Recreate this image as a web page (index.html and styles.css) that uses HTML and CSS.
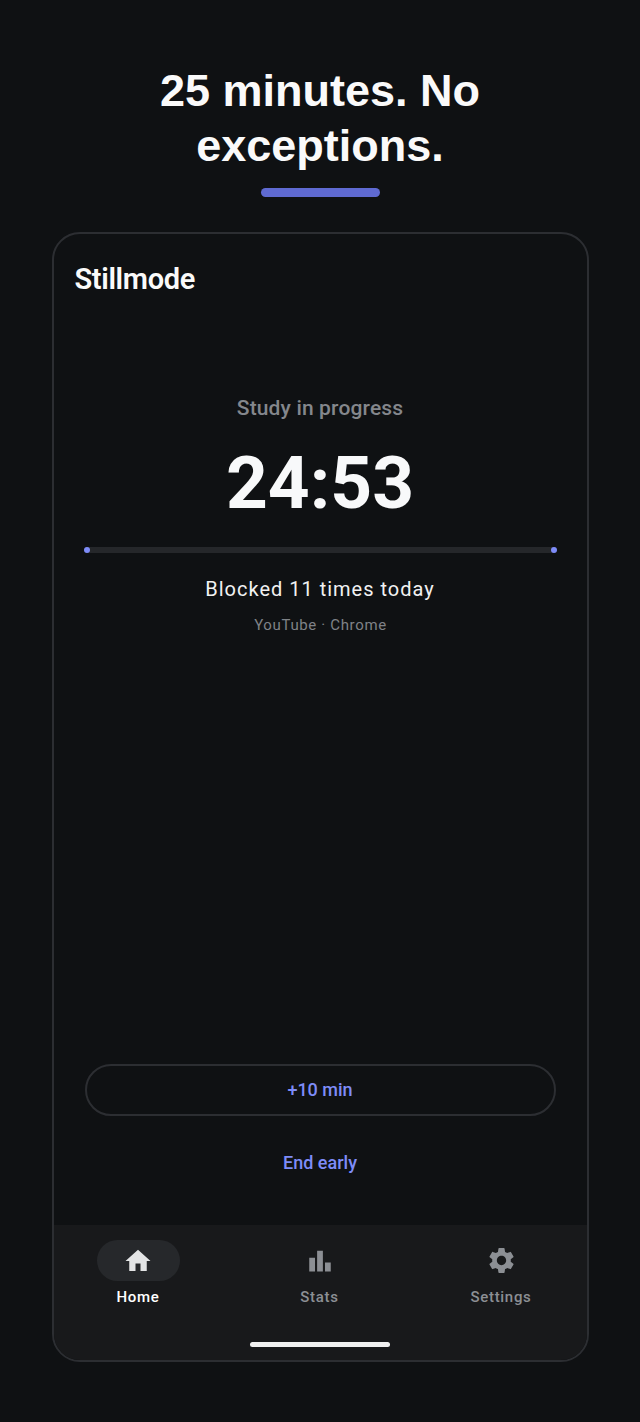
FILE: index.html
```html
<!DOCTYPE html>
<html lang="en">
<head>
<meta charset="utf-8">
<title>Stillmode</title>
<link rel="stylesheet" href="styles.css">
</head>
<body>
<header class="hero">
  <h1 class="headline">25 minutes. No exceptions.</h1>
  <div class="accent"></div>
</header>
<main class="phone">
  <div class="app-title">Stillmode</div>
  <section class="session">
    <div class="status">Study in progress</div>
    <div class="timer">24:53</div>
    <div class="progress"><span class="dot"></span><span class="dot"></span></div>
    <div class="blocked">Blocked 11 times today</div>
    <div class="source">YouTube · Chrome</div>
  </section>
  <section class="actions">
    <div class="extend">+10 min</div>
    <div class="end">End early</div>
  </section>
  <nav class="tabbar">
    <div class="tabs">
      <div class="tab active">
        <div class="pill"><svg class="icon" viewBox="0 0 24 24"><path d="M10 20v-6h4v6h5v-8h3L12 3 2 12h3v8z"/></svg></div>
        <div class="tab-label">Home</div>
      </div>
      <div class="tab">
        <div class="pill"><svg class="icon" viewBox="0 0 24 24"><path d="M3.4 9.4H8v11H3.4zM9.7 3.8h4.6v16.6H9.7zM16 13.2h4.6v7.2H16z"/></svg></div>
        <div class="tab-label">Stats</div>
      </div>
      <div class="tab">
        <div class="pill"><svg class="icon icon-gear" viewBox="0 0 24 24"><path d="M19.14 12.94c.04-.3.06-.61.06-.94 0-.32-.02-.64-.07-.94l2.03-1.58a.49.49 0 0 0 .12-.61l-1.92-3.32a.488.488 0 0 0-.59-.22l-2.39.96c-.5-.38-1.03-.7-1.62-.94l-.36-2.54a.484.484 0 0 0-.48-.41h-3.84c-.24 0-.43.17-.47.41l-.36 2.54c-.59.24-1.13.57-1.62.94l-2.39-.96c-.22-.08-.47 0-.59.22L2.74 8.87c-.12.21-.08.47.12.61l2.03 1.58c-.05.3-.09.63-.09.94s.02.64.07.94l-2.03 1.58a.49.49 0 0 0-.12.61l1.92 3.32c.12.22.37.29.59.22l2.39-.96c.5.38 1.03.7 1.62.94l.36 2.54c.05.24.24.41.48.41h3.84c.24 0 .44-.17.47-.41l.36-2.54c.59-.24 1.13-.56 1.62-.94l2.39.96c.22.08.47 0 .59-.22l1.92-3.32c.12-.22.07-.47-.12-.61l-2.01-1.58zM12 15.6c-1.98 0-3.6-1.62-3.6-3.6s1.62-3.6 3.6-3.6 3.6 1.62 3.6 3.6-1.62 3.6-3.6 3.6z"/></svg></div>
        <div class="tab-label">Settings</div>
      </div>
    </div>
    <div class="home-indicator"></div>
  </nav>
</main>
</body>
</html>
```
FILE: styles.css
```css
* { box-sizing: border-box; }
html, body { margin: 0; height: 100%; }
body {
  background: #0f1113;
  font-family: Roboto, sans-serif;
  color: #fff;
  display: flex;
  flex-direction: column;
  align-items: center;
  height: 1422px;
  overflow: hidden;
}
.hero {
  display: flex;
  flex-direction: column;
  align-items: center;
  padding-top: 63px;
  width: 100%;
}
.headline {
  margin: 0;
  width: 400px;
  text-align: center;
  font-family: "Liberation Sans", Arial, sans-serif;
  font-weight: 700;
  font-size: 45px;
  line-height: 55px;
  color: #fafafa;
}
.accent {
  width: 119px;
  height: 9px;
  margin-top: 15px;
  border-radius: 5px;
  background: #5f6ad2;
}
.phone {
  width: 537px;
  height: 1130px;
  margin-top: 35px;
  border: 2px solid #2c2e32;
  border-radius: 28px;
  overflow: hidden;
  display: flex;
  flex-direction: column;
  background: #0f1113;
}
.app-title {
  padding: 27px 0 0 21px;
  font-size: 29px;
  line-height: 36px;
  font-weight: 600;
  letter-spacing: -0.35px;
  color: #fafafa;
}
.session {
  display: flex;
  flex-direction: column;
  align-items: center;
  padding: 99px 31px 0;
  flex: 1;
}
.status {
  font-size: 21px;
  line-height: 24px;
  font-weight: 500;
  letter-spacing: 0.15px;
  color: #84878c;
}
.timer {
  margin-top: 21px;
  font-size: 73px;
  line-height: 84px;
  font-weight: 700;
  color: #f8f9fa;
}
.progress {
  width: 100%;
  height: 6px;
  margin-top: 22px;
  border-radius: 3px;
  background: #25272a;
  display: flex;
  justify-content: space-between;
}
.dot {
  width: 6px;
  height: 6px;
  margin: 0 -1px;
  border-radius: 50%;
  background: #7e8cf8;
}
.blocked {
  margin-top: 22px;
  font-size: 20px;
  line-height: 28px;
  letter-spacing: 1px;
  color: #f2f2f2;
}
.source {
  margin-top: 12px;
  font-size: 15px;
  line-height: 20px;
  letter-spacing: 0.65px;
  padding-left: 1px;
  color: #7f8287;
}
.actions {
  display: flex;
  flex-direction: column;
  align-items: center;
  padding: 0 31px 49px;
}
.extend {
  width: 100%;
  height: 52px;
  padding-bottom: 2px;
  display: flex;
  align-items: center;
  justify-content: center;
  border: 2px solid #2c2e32;
  border-radius: 26px;
  font-size: 18px;
  font-weight: 500;
  color: #7e8cf8;
}
.end {
  margin-top: 34px;
  font-size: 18px;
  line-height: 26px;
  font-weight: 500;
  color: #7e8cf8;
}
.tabbar {
  height: 135px;
  background: #18191b;
  display: flex;
  flex-direction: column;
  align-items: center;
}
.tabs {
  display: flex;
  justify-content: space-between;
  width: 100%;
  padding: 15px 44px 0 43px;
}
.tab {
  display: flex;
  flex-direction: column;
  align-items: center;
  gap: 5px;
  color: #8c8f94;
}
.pill {
  width: 83px;
  height: 41px;
  border-radius: 21px;
  display: flex;
  align-items: center;
  justify-content: center;
}
.active .pill { background: #26282b; }
.active { color: #fff; }
.active .icon { fill: #e3e4e5; }
.icon {
  width: 30px;
  height: 30px;
  fill: #8c8f94;
}
.icon-gear {
  width: 31px;
  height: 31px;
}
.tab-label {
  font-size: 15px;
  line-height: 22px;
  font-weight: 500;
  letter-spacing: 0.7px;
}
.home-indicator {
  width: 140px;
  height: 5px;
  margin-top: 34px;
  border-radius: 3px;
  background: #f0f0f0;
}
```
